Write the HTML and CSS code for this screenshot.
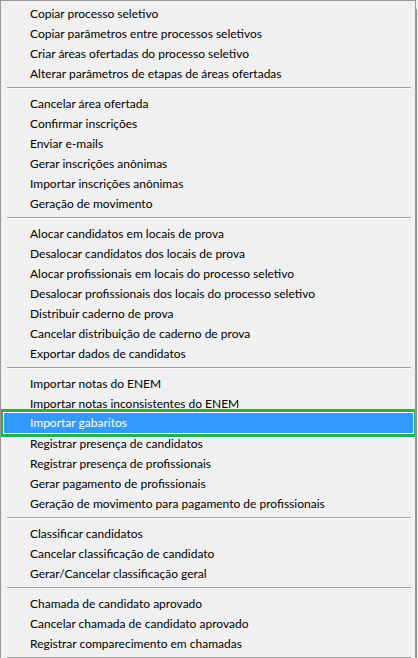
FILE: index.html
```html
<!DOCTYPE html>
<html lang="pt-BR">
<head>
<meta charset="utf-8">
<title>Menu</title>
<link rel="stylesheet" href="styles.css">
</head>
<body>
<div class="menu">
  <div class="item">Copiar processo seletivo</div>
  <div class="item">Copiar parâmetros entre processos seletivos</div>
  <div class="item">Criar áreas ofertadas do processo seletivo</div>
  <div class="item">Alterar parâmetros de etapas de áreas ofertadas</div>
  <div class="sep"></div>
  <div class="item">Cancelar área ofertada</div>
  <div class="item">Confirmar inscrições</div>
  <div class="item">Enviar e-mails</div>
  <div class="item">Gerar inscrições anônimas</div>
  <div class="item">Importar inscrições anônimas</div>
  <div class="item">Geração de movimento</div>
  <div class="sep"></div>
  <div class="item">Alocar candidatos em locais de prova</div>
  <div class="item">Desalocar candidatos dos locais de prova</div>
  <div class="item">Alocar profissionais em locais do processo seletivo</div>
  <div class="item">Desalocar profissionais dos locais do processo seletivo</div>
  <div class="item">Distribuir caderno de prova</div>
  <div class="item">Cancelar distribuição de caderno de prova</div>
  <div class="item">Exportar dados de candidatos</div>
  <div class="sep"></div>
  <div class="item">Importar notas do ENEM</div>
  <div class="item">Importar notas inconsistentes do ENEM</div>
  <div class="item active">Importar gabaritos</div>
  <div class="item">Registrar presença de candidatos</div>
  <div class="item">Registrar presença de profissionais</div>
  <div class="item">Gerar pagamento de profissionais</div>
  <div class="item">Geração de movimento para pagamento de profissionais</div>
  <div class="sep"></div>
  <div class="item">Classificar candidatos</div>
  <div class="item">Cancelar classificação de candidato</div>
  <div class="item">Gerar/Cancelar classificação geral</div>
  <div class="sep"></div>
  <div class="item">Chamada de candidato aprovado</div>
  <div class="item">Cancelar chamada de candidato aprovado</div>
  <div class="item">Registrar comparecimento em chamadas</div>
  <div class="sep last"></div>
</div>
</body>
</html>
```

FILE: styles.css
```css
html, body {
  margin: 0;
  padding: 0;
  background: #f0f0f0;
  overflow: hidden;
}

body {
  width: 418px;
  height: 658px;
}

/* popup menu, continues below the visible area */
.menu {
  box-sizing: border-box;
  width: 416px;
  height: 658px;
  overflow: hidden;
  background: #f0f0f0;
  border: 1px solid #979797;
  border-bottom: none;
  padding: 2px 2px 0 3px;
  box-shadow: 2px 8px 0 -1px #8e8e8e;
  font-family: Lato, "Noto Sans", sans-serif;
  font-size: 12px;
  color: #000;
}

.item {
  height: 20px;
  line-height: 22px;
  padding-left: 26px;
  white-space: nowrap;
}

.item.active {
  position: relative;
  z-index: 1;
  background: #3399ff;
  color: #fff;
  line-height: 20px;
  box-shadow: 0 0 0 1px #ffffff, 0 0 0 4px #22b14c;
}

.sep {
  height: 1px;
  margin: 4px 2px 4px 3px;
  background: #a0a0a0;
  border-bottom: 1px solid #ffffff;
}

.sep.last {
  margin-bottom: 0;
}
```
